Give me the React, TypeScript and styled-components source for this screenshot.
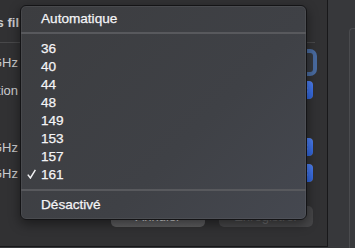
import styled, { createGlobalStyle } from 'styled-components'

const GlobalStyle = createGlobalStyle`
  html, body {
    margin: 0;
    padding: 0;
    background: #37383b;
    overflow: hidden;
  }
  body {
    font-family: "Liberation Sans", Arial, sans-serif;
  }
`

const Screen = styled.div`
  display: flex;
  width: 355px;
  height: 248px;
  position: relative;
  overflow: hidden;
`
const Sheet = styled.div`
  width: 313px;
  height: 246px;
  padding-right: 14px;
  background: #313133;
  border-right: 1px solid #18181a;
  border-bottom: 1px solid #18181a;
  display: flex;
  flex-direction: column;
`
const OuterStrip = styled.div`
  flex: 1;
  display: flex;
  padding: 28px 0 0 21px;
`
const OuterPanel = styled.div`
  flex: 1;
  border-left: 1px solid #4a4b4e;
  border-top: 1px solid #4a4b4e;
  border-top-left-radius: 4px;
  background: #393a3d;
`
const Header = styled.div`
  height: 43px;
  display: flex;
  align-items: center;
  padding-top: 2px;
  box-sizing: border-box;
  border-bottom: 1px solid #48484a;
  margin-right: -2px;
`
const Label = styled.div<{ bold?: boolean }>`
  width: ${({ bold }) => (bold ? 19 : 18)}px;
  flex: none;
  display: flex;
  justify-content: flex-end;
  overflow: hidden;
  white-space: nowrap;
  color: #cbcbcd;
  font-size: 13px;
  font-weight: ${({ bold }) => (bold ? 700 : 400)};
`
const Row = styled.div<{ gap: number }>`
  height: 26px;
  margin-top: ${({ gap }) => gap}px;
  display: flex;
  align-items: center;
  justify-content: space-between;
`
const FocusField = styled.div`
  width: 120px;
  height: 19px;
  border-radius: 3px;
  background: #35383d;
  box-shadow: 0 0 0 4px rgba(78, 118, 180, 0.85);
`
const Popup = styled.div`
  width: 140px;
  height: 18px;
  border-radius: 4px;
  background: #626264;
  display: flex;
  justify-content: flex-end;
  overflow: hidden;
`
const PopupArrows = styled.div`
  width: 16px;
  height: 18px;
  background: linear-gradient(#4d7ff2, #2f63d8);
  display: flex;
  align-items: center;
  justify-content: center;
  border-radius: 0 4px 4px 0;
`
const ButtonBar = styled.div`
  margin-top: 20px;
  display: flex;
  justify-content: flex-end;
  gap: 14px;
`
const Button = styled.div<{ disabled?: boolean }>`
  width: 94px;
  height: 21px;
  border-radius: 5px;
  background: ${({ disabled }) => (disabled ? '#464648' : 'linear-gradient(#666668, #5c5c5e)')};
  color: ${({ disabled }) => (disabled ? '#6c6c6e' : '#e4e4e6')};
  font-size: 13px;
  display: flex;
  align-items: center;
  justify-content: center;
`

const Menu = styled.div`
  position: absolute;
  left: 20px;
  top: 5px;
  width: 285px;
  height: 210px;
  border: 1px solid #141416;
  border-radius: 6px;
  background: linear-gradient(135deg, #3c3d40 0%, #3f4146 60%, #454850 100%);
  box-shadow: 0 4px 12px rgba(0, 0, 0, 0.45), inset 0 0 0 1px rgba(255, 255, 255, 0.06);
  padding-top: 3px;
  box-sizing: content-box;
  display: flex;
  flex-direction: column;
`
const Item = styled.div`
  height: 18px;
  display: flex;
  align-items: center;
  color: #f4f4f6;
  font-size: 13.6px;
  -webkit-text-stroke: 0.25px #f4f4f6;
`
const CheckCell = styled.div`
  width: 20px;
  flex: none;
  display: flex;
  padding-left: 6px;
  box-sizing: border-box;
`
const Separator = styled.div<{ above: number; below: number }>`
  height: 2px;
  background: #58595d;
  margin: ${({ above, below }) => `${above}px 0 ${below}px`};
`

const Arrows = () => (
  <svg width="6" height="10" viewBox="0 0 6 10">
    <path d="M1 3.5 L3 1.5 L5 3.5 M1 6.5 L3 8.5 L5 6.5" stroke="#fff" strokeWidth="1.2" fill="none" />
  </svg>
)

const Check = () => (
  <svg width="9" height="10" viewBox="0 0 9 10">
    <path d="M0.8 5.6 L3.4 9 L8.4 0.8" stroke="#f2f2f4" strokeWidth="1.5" fill="none" />
  </svg>
)

const CHANNELS = ['36', '40', '44', '48', '149', '153', '157', '161']

export default function App() {
  return (
    <>
      <GlobalStyle />
      <Screen>
        <Sheet>
          <Header>
            <Label bold>Réseaux sans fil</Label>
          </Header>
          <Row gap={6}>
            <Label>Canal 5 GHz</Label>
            <FocusField />
          </Row>
          <Row gap={2}>
            <Label>Sélection</Label>
            <Popup>
              <PopupArrows>
                <Arrows />
              </PopupArrows>
            </Popup>
          </Row>
          <Row gap={31}>
            <Label>Largeur 2,4 GHz</Label>
            <Popup>
              <PopupArrows>
                <Arrows />
              </PopupArrows>
            </Popup>
          </Row>
          <Row gap={0}>
            <Label>Largeur 5 GHz</Label>
            <Popup>
              <PopupArrows>
                <Arrows />
              </PopupArrows>
            </Popup>
          </Row>
          <ButtonBar>
            <Button>Annuler</Button>
            <Button disabled>Enregistrer</Button>
          </ButtonBar>
        </Sheet>
        <OuterStrip>
          <OuterPanel />
        </OuterStrip>
        <Menu>
          <Item>
            <CheckCell />
            Automatique
          </Item>
          <Separator above={5} below={5} />
          {CHANNELS.map((ch) => (
            <Item key={ch}>
              <CheckCell>{ch === '161' && <Check />}</CheckCell>
              {ch}
            </Item>
          ))}
          <Separator above={6} below={4} />
          <Item>
            <CheckCell />
            Désactivé
          </Item>
        </Menu>
      </Screen>
    </>
  )
}
